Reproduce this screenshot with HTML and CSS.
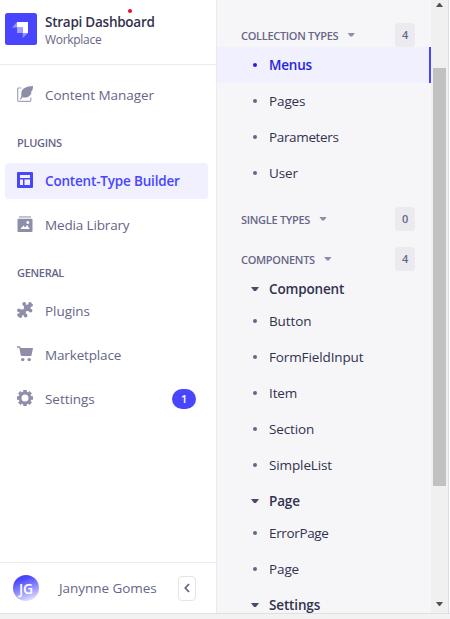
FILE: index.html
```html
<!DOCTYPE html>
<html lang="en">
<head>
<meta charset="utf-8">
<title>Strapi Dashboard</title>
<link rel="stylesheet" href="styles.css">
</head>
<body>
<div class="app">
  <aside class="sidebar">
    <header class="brand">
      <svg class="logo" viewBox="0 0 32 32"><rect width="32" height="32" rx="2.5" fill="#4945ff"/><path d="M12 9h11v11h-5.300v-5.500H12z" fill="#fff"/><path d="M12 9v5.500H7zM17.700 20H23l-5.300 5z" fill="#9593ff"/><path d="M12 14.500h5.700V20H12z" fill="#a4a2ff"/></svg>
      <div><div class="brand-title">Strapi Dashboard</div><div class="brand-sub">Workplace</div></div>
      <i class="dot"></i>
    </header>
    <nav class="nav">
      <a class="item"><svg viewBox="0 0 16 16"><path d="M4.500 2H1.500Q.7 2 .7 2.800v11.500q0 1 .9 1H13q.8 0 .8-.8V11.500" fill="none" stroke="#a5a5ba" stroke-width="1.200"/><path d="M16.200 0C9 0 4.500 2.800 4.300 7.500c0 1 0 2 .1 2.800L2.800 13.200l1 .4 1.700-2.300c5.500.9 8.200-1.300 9-5.100l-1-.1 1.700-1.300C15.700 3.300 16 1.500 16.200 0z" fill="#8e8ea9"/></svg><span>Content Manager</span></a>
      <h2>PLUGINS</h2>
      <a class="item active"><svg viewBox="0 0 16 16"><path fill-rule="evenodd" d="M1 0h14q1 0 1 1v14q0 1-1 1H1q-1 0-1-1V1q0-1 1-1zM3 3v3h10V3zM3 7.500V13h3V7.500zM7.500 7.500V13H13V7.500z" fill="#4945ff"/></svg><span>Content-Type Builder</span></a>
      <a class="item"><svg viewBox="0 0 16 16"><path d="M2 0h12v1.800H2z" fill="#c0c0cf"/><path fill-rule="evenodd" d="M1.500 2.800h13q1 0 1 1V15q0 1-1 1h-13q-1 0-1-1V3.800q0-1 1-1zM3.300 13h9.400l-2.600-4-1.900 2.400L6.500 9.500zM10.800 5.100a1.500 1.500 0 1 0 .01 0z" fill="#8e8ea9"/></svg><span class="tight">Media Library</span></a>
      <h2>GENERAL</h2>
      <a class="item"><svg viewBox="0 0 16 16"><g fill="#8e8ea9"><path d="M7 3.500L12.500 2l1.700 1.500L12.800 9 9 9.200 8.500 12.500 3.500 14 2 12.500 3.200 7.500l3.600-.3z"/><circle cx="7.200" cy="2" r="1.900"/><circle cx="13" cy="1.900" r="1.800"/><circle cx="14.300" cy="3.100" r="1.700"/><circle cx="13.500" cy="8.600" r="1.900"/><circle cx="2" cy="8.300" r="1.900"/><circle cx="1.800" cy="13" r="1.700"/><circle cx="3.400" cy="14.200" r="1.700"/><circle cx="8.600" cy="13.500" r="1.900"/></g></svg><span>Plugins</span></a>
      <a class="item"><svg viewBox="0 0 16 16"><path d="M0 .2h2.500q.7 0 .9.800l.2.900H16L14.600 9q-.2.900-1 .9H4.700q-.9 0-1-.8L2.300 1.700H0z" fill="#8e8ea9"/><circle cx="5.700" cy="13.600" r="1.700" fill="#8e8ea9"/><circle cx="12.200" cy="13.600" r="1.700" fill="#8e8ea9"/></svg><span class="tight">Marketplace</span></a>
      <a class="item"><svg viewBox="0 0 16 16"><circle cx="8" cy="8" r="5" fill="none" stroke="#8e8ea9" stroke-width="3"/><path d="M8 0v2M8 14v2M0 8h2M14 8h2M2.300 2.300l1.500 1.500M12.200 12.200l1.500 1.500M2.300 13.700l1.500-1.500M12.200 3.800l1.500-1.500" stroke="#8e8ea9" stroke-width="3.600"/></svg><span>Settings</span><b class="pill">1</b></a>
    </nav>
    <footer class="user"><span class="avatar">JG</span><span class="name">Janynne Gomes</span><span class="collapse"><svg viewBox="0 0 6 10"><path d="M5 1L1.300 5 5 9" fill="none" stroke="#666687" stroke-width="1.800"/></svg></span></footer>
  </aside>
  <main class="panel">
    <section>
      <div class="head"><span>COLLECTION TYPES</span><i class="caret"></i><b class="count">4</b></div>
      <a class="row current"><span>Menus</span></a>
      <a class="row"><span>Pages</span></a>
      <a class="row"><span class="tight">Parameters</span></a>
      <a class="row"><span>User</span></a>
    </section>
    <section>
      <div class="head"><span>SINGLE TYPES</span><i class="caret"></i><b class="count">0</b></div>
    </section>
    <section>
      <div class="head"><span>COMPONENTS</span><i class="caret"></i><b class="count">4</b></div>
      <div class="group"><i class="caret"></i><span>Component</span></div>
      <a class="row"><span>Button</span></a>
      <a class="row"><span>FormFieldInput</span></a>
      <a class="row"><span>Item</span></a>
      <a class="row"><span>Section</span></a>
      <a class="row"><span>SimpleList</span></a>
      <div class="group"><i class="caret"></i><span>Page</span></div>
      <a class="row"><span class="tight">ErrorPage</span></a>
      <a class="row"><span>Page</span></a>
      <div class="group"><i class="caret"></i><span>Settings</span></div>
    </section>
  </main>
  <div class="scroll"><i class="up"></i><div class="thumb"></div><i class="down"></i></div>
</div>
</body>
</html>
```

FILE: styles.css
```css
* { box-sizing: border-box; }
body { margin: 0; height: 619px; overflow: hidden; background: #f2f2f2; font: 13.5px/20px "Open Sans", "Noto Sans", sans-serif; color: #32324d; }
.app { display: flex; height: 614px; background: #fff; border-bottom: 1px solid #dfdfe6; overflow: hidden; }
.sidebar { width: 217px; flex: none; border-right: 1px solid #eaeaef; display: flex; flex-direction: column; }
.brand { position: relative; height: 65px; flex: none; border-bottom: 1px solid #eaeaef; display: flex; gap: 8px; padding: 13px 0 0 5px; }
.logo { width: 32px; height: 32px; flex: none; }
.brand-title { font-weight: 600; line-height: 18px; letter-spacing: -.25px; }
.brand-sub { font-size: 12px; line-height: 18px; color: #666687; letter-spacing: -.3px; }
.dot { position: absolute; left: 128px; top: 9px; width: 4px; height: 4px; border-radius: 50%; background: #e81123; }
.nav { flex: 1; padding: 12px 8px 0 5px; }
.item { display: flex; align-items: center; height: 36px; margin-bottom: 8px; padding: 0 12px; color: #666687; border-radius: 4px; white-space: nowrap; letter-spacing: -.05px; }
.item svg { width: 16px; height: 16px; margin: -2px 12px 0 0; flex: none; }
.item .tight { letter-spacing: -.15px; }
.active { background: #f0f0ff; color: #4945ff; font-weight: 600; letter-spacing: -.18px; }
h2 { font-size: 11px; line-height: 20px; margin: 20px 0 10px 12px; font-weight: 600; color: #666687; letter-spacing: -.3px; }
.pill { margin-left: auto; width: 24px; height: 20px; border-radius: 10px; background: #4945ff; color: #fff; font-size: 11px; font-weight: 600; text-align: center; }
.user { height: 51px; border-top: 1px solid #eaeaef; display: flex; align-items: center; padding: 0 20px 0 13px; color: #666687; }
.avatar { width: 26px; height: 26px; border-radius: 50%; background: linear-gradient(160deg, #4945ff 20%, #a5a3ff 65%, #fff 100%); color: #fff; font-weight: 600; font-size: 14px; line-height: 27px; text-align: center; letter-spacing: -.3px; }
.name { margin-left: 20px; letter-spacing: -.05px; white-space: nowrap; }
.collapse { margin-left: auto; width: 18px; height: 25px; border: 1px solid #e4e4ec; border-radius: 4px; display: flex; align-items: center; justify-content: center; }
.collapse svg { width: 6px; height: 10px; }
.panel { width: 214px; flex: none; background: #f6f6f9; padding-top: 23px; }
section { margin-bottom: 16px; }
.head { height: 24px; display: flex; align-items: center; padding: 0 16px 0 24px; font-size: 11px; font-weight: 600; color: #666687; white-space: nowrap; letter-spacing: -.3px; }
.head span { padding-top: 1px; }
.caret { flex: none; width: 8px; height: 4px; background: #8e8ea9; clip-path: polygon(0 0, 100% 0, 62% 100%, 38% 100%); }
.head .caret { margin: -1px 0 0 9px; }
.count { margin-left: auto; width: 20px; height: 24px; border-radius: 4px; background: #eaeaef; font-size: 11px; line-height: 24px; font-weight: 600; text-align: center; }
.row { display: flex; align-items: center; height: 36px; padding-left: 36px; letter-spacing: -.12px; }
.row .tight { letter-spacing: -.35px; }
.row::before { content: ""; width: 4px; height: 4px; border-radius: 50%; background: #666687; margin-right: 12px; }
.current { background: #f0f0ff; color: #271fe0; font-weight: 600; border-right: 2px solid #4945ff; letter-spacing: -.2px; }
.current::before { background: #271fe0; }
.group { height: 32px; padding: 4px 0 0 34px; display: flex; align-items: center; font-weight: 600; letter-spacing: -.15px; }
.group .caret { background: #4a4a6a; margin-right: 10px; }
.scroll { width: 18px; flex: none; background: #f0f0f0; border-right: 1px solid #dcdce4; display: flex; flex-direction: column; position: relative; }
.thumb { width: 13px; height: 418px; margin: 68px 0 0 2px; background: #c1c1c1; }
.up, .down { position: absolute; left: 5px; width: 7px; height: 4px; background: #505050; }
.up { top: 3px; clip-path: polygon(43% 0, 57% 0, 100% 100%, 0 100%); }
.down { bottom: 7px; clip-path: polygon(0 0, 100% 0, 57% 100%, 43% 100%); }
```
